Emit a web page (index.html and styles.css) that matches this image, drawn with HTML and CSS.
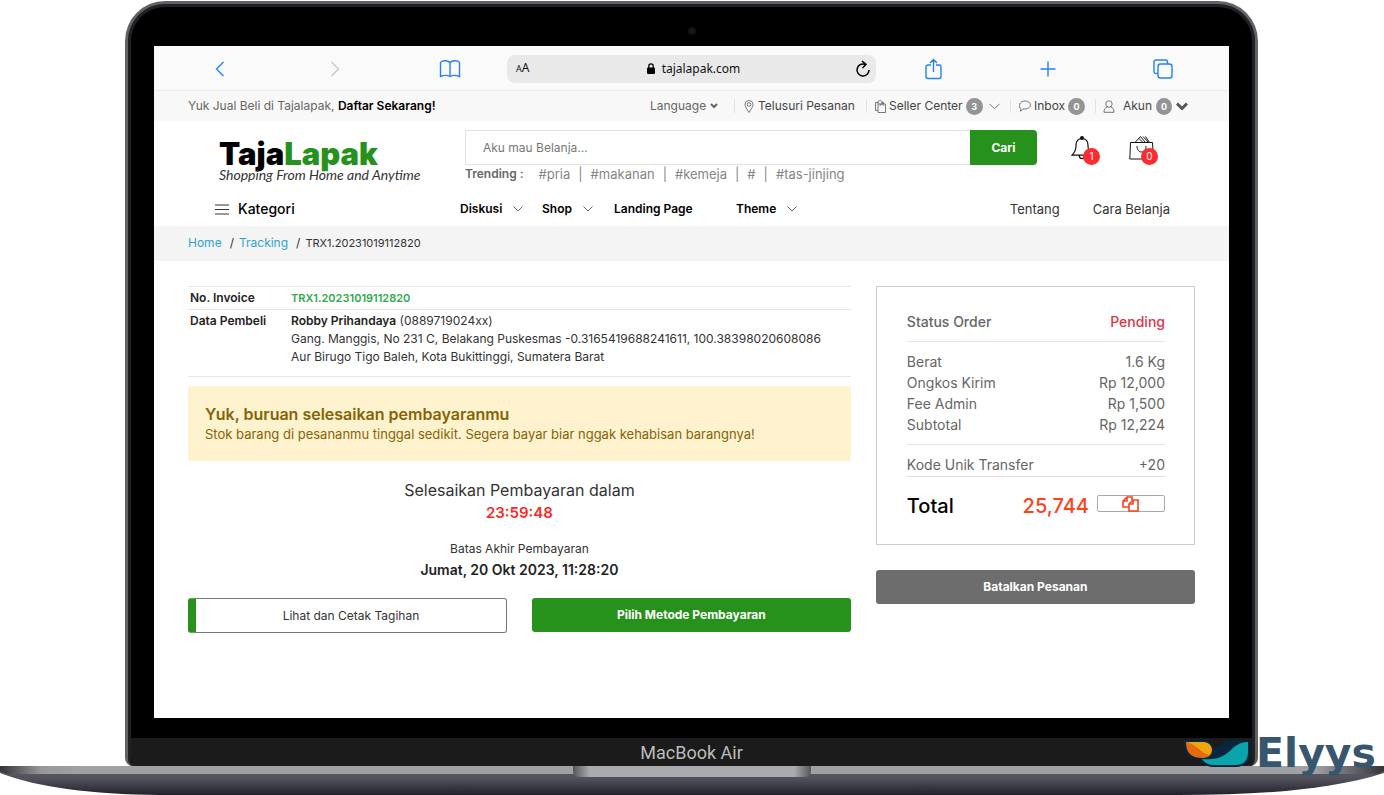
FILE: index.html
```html
<!DOCTYPE html>
<html lang="id">
<head>
<meta charset="utf-8">
<meta name="viewport" content="width=device-width, initial-scale=1">
<title>TajaLapak - Tracking</title>
<link rel="stylesheet" href="styles.css">
</head>
<body>
<div class="laptop">
  <div class="lid">
    <div class="bezel"><span class="camera"></span></div>
    <div class="screen">
      <div class="browser">
        <button class="tool" aria-label="Kembali"><svg width="12" height="18" viewBox="0 0 12 18"><path d="M9.500 2 2.500 9l7 7"/></svg></button>
        <button class="tool tool-off" aria-label="Maju"><svg width="12" height="18" viewBox="0 0 12 18"><path d="M2.500 2l7 7-7 7"/></svg></button>
        <button class="tool" aria-label="Bookmark"><svg width="22" height="20" viewBox="0 0 22 20"><path d="M11 4C9.500 1 3 1 1.500 3.500V17.500c3-1.300 7-1.300 9.500 0 2.500-1.300 6.500-1.300 9.500 0V3.500C19 1 12.500 1 11 4zM11 4v13.500"/></svg></button>
        <div class="address">
          <span class="font-size"><small>A</small>A</span>
          <span class="url"><svg width="8" height="11" viewBox="0 0 8 11"><rect y="4.500" width="8" height="6.500" rx="1"/><path d="M1.800 5V3a2.200 2.200 0 0 1 4.400 0v2" fill="none" stroke="#000" stroke-width="1.300"/></svg>tajalapak.com</span>
          <button class="reload" aria-label="Muat ulang"><svg width="16" height="18" viewBox="0 0 16 18"><path d="M10 4.300A6 6 0 1 0 14 10"/><path d="M7 1l4 3.300L7.500 8"/></svg></button>
        </div>
        <button class="tool" aria-label="Bagikan"><svg width="17" height="22" viewBox="0 0 17 22"><path d="M6 7H3a2 2 0 0 0-2 2v9.500a2 2 0 0 0 2 2h11a2 2 0 0 0 2-2V9a2 2 0 0 0-2-2h-3M8.500 14V2M5 5l3.500-3.500L12 5"/></svg></button>
        <button class="tool" aria-label="Tab baru"><svg width="16" height="16" viewBox="0 0 16 16"><path d="M8 .5v15M.5 8h15"/></svg></button>
        <button class="tool" aria-label="Semua tab"><svg width="20" height="20" viewBox="0 0 20 20"><rect x="5" y="5" width="14" height="14" rx="2.500"/><path d="M5 14.500H3a2 2 0 0 1-2-2V3a2 2 0 0 1 2-2h9.500a2 2 0 0 1 2 2v2"/></svg></button>
      </div>

      <div class="topbar">
        <p>Yuk Jual Beli di Tajalapak, <a href="#"><b>Daftar Sekarang!</b></a></p>
        <div class="links">
          <button class="link soft">Language <svg class="caret" width="8" height="6" viewBox="0 0 8 6"><path d="M1 1l3 3 3-3"/></svg></button>
          <a class="link" href="#"><svg width="10" height="13" viewBox="0 0 10 13"><path d="M5 12.500C3 9 1 7 1 4.500a4 4 0 0 1 8 0C9 7 7 9 5 12.500z"/><circle cx="5" cy="4.500" r="1.800"/></svg>Telusuri Pesanan</a>
          <a class="link seller" href="#"><svg width="11" height="13" viewBox="0 0 11 13"><path d="M3 10.500H.5v-8H3M7 2.500h1.500V4M3 4h7.500v8.500H3zM3 4V2c0-2 4-2 4 0v2M5 6c0-2.500 3.500-2.500 3.500 0"/></svg>Seller Center<span class="count">3</span><svg class="thin" width="11" height="7" viewBox="0 0 11 7"><path d="M.5.800 5.500 5.800l5-5"/></svg></a>
          <a class="link seller" href="#"><svg width="12" height="12" viewBox="0 0 12 12"><path d="M2 9.300C-1 6.500.5 1 6 1c7 0 7.500 7.500 0 8-1 0-1.500 0-2-.3C3.500 10 2.500 11 1 11c.8-.5 1-1 1-1.700z"/></svg>Inbox<span class="count">0</span></a>
          <button class="link account"><svg width="12" height="13" viewBox="0 0 12 13"><circle cx="6" cy="4" r="3.200"/><path d="M4.500 7C2 7.500 1 9 1 12.300h10C11 9 10 7.500 7.500 7"/></svg><span class="name">Akun</span><span class="count">0</span><svg class="bold" width="12" height="8" viewBox="0 0 12 8"><path d="M1 1.500l5 5 5-5"/></svg></button>
        </div>
      </div>

      <header class="header">
        <div class="masthead">
          <a class="logo" href="#"><span class="logo-name">Taja<em>Lapak</em></span><span class="logo-tag">Shopping From Home and Anytime</span></a>
          <div class="finder">
            <form class="search">
              <input type="text" aria-label="Cari produk" placeholder="Aku mau Belanja...">
              <button type="button">Cari</button>
            </form>
            <div class="trending"><b>Trending :</b><a href="#">#pria</a><i>|</i><a href="#">#makanan</a><i>|</i><a href="#">#kemeja</a><i>|</i><a href="#">#</a><i>|</i><a href="#">#tas-jinjing</a></div>
          </div>
          <div class="shortcuts">
            <a class="shortcut" href="#" aria-label="Notifikasi"><svg width="22" height="26" viewBox="0 0 24 26"><circle cx="12" cy="2" r="1.500" fill="#000"/><path d="M12 2.800c-4.500 0-6.500 3-6.500 7 0 6-1.500 8.500-4.500 11h22c-3-2.500-4.500-5-4.500-11 0-4-2-7-6.500-7zM9 21.500c0 4 6 4 6 0"/></svg><span class="alert-count">1</span></a>
            <a class="shortcut bag" href="#" aria-label="Keranjang"><svg width="25" height="26" viewBox="0 0 25 26"><path d="M1.500 7.500h22l1 16.500H.800zM6 7.500l5.500-6 5 6M10 3.500l4 4M14 1.500l5.500 6M16.500 1.500l4 6M8 11c0 8 9 8 9 0"/></svg><span class="alert-count">0</span></a>
          </div>
        </div>
        <nav class="nav">
          <button class="category"><svg width="14" height="11" viewBox="0 0 14 11"><path d="M0 1h14M0 5.500h14M0 10h14"/></svg>Kategori</button>
          <div class="menu">
            <a href="#">Diskusi<svg width="10" height="6" viewBox="0 0 10 6"><path d="M.5.500 5 5 9.500.500"/></svg></a>
            <a href="#">Shop<svg width="10" height="6" viewBox="0 0 10 6"><path d="M.5.500 5 5 9.500.500"/></svg></a>
            <a href="#">Landing Page</a>
            <a href="#">Theme<svg width="10" height="6" viewBox="0 0 10 6"><path d="M.5.500 5 5 9.500.500"/></svg></a>
          </div>
          <div class="pages"><a href="#">Tentang</a><a href="#">Cara Belanja</a></div>
        </nav>
      </header>

      <div class="crumbs"><a href="#">Home</a><span>/</span><a href="#">Tracking</a><span>/</span><small>TRX1.20231019112820</small></div>

      <main class="content">
        <section>
          <table class="invoice">
            <tr><th scope="row">No. Invoice</th><td><b class="number">TRX1.20231019112820</b></td></tr>
            <tr><th scope="row">Data Pembeli</th><td><b>Robby Prihandaya</b> (0889719024xx)<br>Gang. Manggis, No 231 C, Belakang Puskesmas -0.3165419688241611, 100.38398020608086<br>Aur Birugo Tigo Baleh, Kota Bukittinggi, Sumatera Barat</td></tr>
          </table>
          <div class="notice">
            <h2>Yuk, buruan selesaikan pembayaranmu</h2>
            <p>Stok barang di pesananmu tinggal sedikit. Segera bayar biar nggak kehabisan barangnya!</p>
          </div>
          <div class="deadline">
            <p class="lead">Selesaikan Pembayaran dalam</p>
            <p class="timer">23:59:48</p>
            <p class="until">Batas Akhir Pembayaran</p>
            <p class="date">Jumat, 20 Okt 2023, 11:28:20</p>
          </div>
          <div class="actions">
            <button class="btn outline">Lihat dan Cetak Tagihan</button>
            <button class="btn green">Pilih Metode Pembayaran</button>
          </div>
        </section>
        <aside>
          <div class="summary">
            <div class="row status"><span>Status Order</span><span class="pending">Pending</span></div>
            <div class="costs">
              <div class="row"><span>Berat</span><span>1.6 Kg</span></div>
              <div class="row"><span>Ongkos Kirim</span><span>Rp 12,000</span></div>
              <div class="row"><span>Fee Admin</span><span>Rp 1,500</span></div>
              <div class="row"><span>Subtotal</span><span>Rp 12,224</span></div>
            </div>
            <div class="row code"><span>Kode Unik Transfer</span><span>+20</span></div>
            <div class="total"><span>Total</span><span class="amount">25,744</span>
              <button class="copy" aria-label="Salin total"><svg width="17" height="16" viewBox="0 0 17 16"><path d="M6.500 11H1V5l4-4h5v3M5 1v4H1M7 8l4-4h5v11H7zM11 4v4H7"/></svg></button>
            </div>
          </div>
          <button class="btn grey">Batalkan Pesanan</button>
        </aside>
      </main>
    </div>
    <div class="chin">MacBook Air</div>
  </div>
  <svg class="base" viewBox="0 0 1384 29" preserveAspectRatio="none">
    <defs>
      <linearGradient id="body" x2="0" y2="1"><stop offset="0" stop-color="#5d5e67"/><stop offset=".45" stop-color="#50515a"/><stop offset="1" stop-color="#20212b"/></linearGradient>
      <linearGradient id="edge"><stop offset="0" stop-color="#33343a"/><stop offset=".03" stop-color="#98989c"/><stop offset=".06" stop-color="#a1a1a5"/><stop offset=".95" stop-color="#a1a1a5"/><stop offset="1" stop-color="#33343a"/></linearGradient>
      <linearGradient id="notch"><stop offset="0" stop-color="#55565e"/><stop offset=".07" stop-color="#a9aaaf"/><stop offset=".93" stop-color="#a9aaaf"/><stop offset="1" stop-color="#55565e"/></linearGradient>
    </defs>
    <path fill="url(#body)" d="M0 0H1384V7C1330 24 1260 29 1180 29H160C90 28 40 22 0 7z"/>
    <path fill="url(#edge)" d="M0 0H1384V5L1378 8H6L0 5z"/>
    <path fill="url(#notch)" d="M573 0H811V5q0 6-7 6H580q-7 0-7-6z"/>
    <path stroke="#34353e" stroke-dasharray="4 2" d="M450 20.500h16M918 20.500h16"/>
  </svg>
  <div class="maker">
    <svg width="66" height="28" viewBox="0 0 66 28"><path fill="#08273f" d="M0 1h20c5 0 8 3 9 8 8-1 10-8 20-8h17v12c0 10-6 15-14 15H30c-7 0-12-3-14-8C5 20 0 15 0 1z"/><path fill="#e56910" d="M2 3h17c12 1 12 16 0 16C6 19 2 13 2 3z"/><path fill="#efa510" d="M2 3h17c9 0 11 9 6 13C17 14 12 5 2 3z"/><path fill="#0aa5ab" d="M18 20c30 3 27-17 46-17v10c0 9-5 13-12 13H30c-6 0-9-2-12-6z"/></svg>
    <span>Elyys</span>
  </div>
</div>
</body>
</html>
```
FILE: styles.css
```css
* { box-sizing: border-box; }
body { margin: 0; background: #fff; color: #333; font: 12px/18px Inter, "Open Sans", sans-serif; }
p, h2 { margin: 0; }
a { color: inherit; text-decoration: none; }
button { padding: 0; border: 0; background: none; color: inherit; font: inherit; }
b { font-weight: 600; }
svg { fill: none; stroke: currentColor; flex: none; }

.laptop { position: relative; padding-top: 1px; overflow: hidden; }
.lid { margin: 0 126px 0 125px; padding: 0 23px; border: 3px solid #606266; border-bottom: 0; border-radius: 40px 40px 8px 8px; background: #000; box-shadow: inset 0 0 0 3px #202124; }
.bezel { height: 42px; display: flex; justify-content: center; align-items: center; padding-top: 12px; }
.camera { width: 8px; height: 8px; border-radius: 50%; background: #1a1b20; border: 2px solid #101114; }
.screen { margin: 0 3px; background: #fff; }
.chin { margin: 20px -20px 0; height: 28px; border-radius: 0 0 8px 8px; background: #1b1b1b; color: #bcbcbc; text-align: center; font: 18px/29px Roboto, sans-serif; }
.base { display: block; width: 100%; height: 29px; stroke: none; }

.browser { display: grid; grid-template-columns: 1fr 1fr 1fr 369px 1fr 1fr 1fr; align-items: center; height: 45px; padding: 1px 9px 0; background: #fafafa; border-bottom: 1px solid #ececec; }
.tool { display: grid; place-items: center; color: #2880f5; }
.tool svg { stroke-width: 1.4; }
.tool-off { color: #c8c8c8; }
.address { display: grid; grid-template-columns: 1fr auto 1fr; align-items: center; height: 28px; padding: 0 5px 0 9px; border-radius: 8px; background: #e9e9e9; color: #111; font-family: "Noto Sans", sans-serif; }
.font-size small { font-size: 9px; }
.url { display: flex; align-items: center; gap: 7px; }
.url svg { fill: #000; stroke: none; }
.reload { justify-self: end; display: flex; color: #000; }
.reload svg { stroke-width: 1.5; }

.topbar { display: flex; justify-content: space-between; align-items: center; height: 30px; padding: 0 41px 0 34px; background: #f8f8f8; color: #666; }
.topbar b { color: #000; }
.links { display: grid; grid-template-columns: 94px 132px 144px 85px 93px; }
.link { display: flex; align-items: center; gap: 4px; height: 14px; padding-left: 9px; border-left: 1px solid #e3e3e3; color: #444; white-space: nowrap; }
.link.soft { border-left-color: transparent; color: #666; }
.link.seller { gap: 3px; padding-left: 8px; }
.link svg { stroke-width: .7; }
.link .caret { stroke-width: 2; }
.link .bold { stroke-width: 3; color: #555; }
.link .thin { margin-left: 3px; }
.link.account { padding-left: 7px; }
.name { margin-left: 4px; }
.count { width: 17px; height: 17px; border-radius: 50%; background: #949494; color: #fff; font-size: 9px; font-weight: 700; line-height: 17px; text-align: center; }

.header { height: 105px; padding-top: 9px; }
.masthead { display: flex; align-items: flex-start; padding: 0 71px 0 65px; }
.logo { width: 246px; padding-top: 9px; display: flex; flex-direction: column; color: #000; }
.logo-name { font: 900 31px/29px Inter, sans-serif; }
.logo-name em { color: #27921b; font-style: normal; }
.logo-tag { color: #333; font: italic 14px/14px Lato, sans-serif; }
.finder { flex: 1; }
.search { display: flex; height: 35px; }
.search input { flex: 1; min-width: 0; padding: 0 17px; border: 1px solid #e2e2e2; border-right: 0; background: #fff; font: inherit; }
.search input::placeholder { color: #777; opacity: 1; }
.search button { width: 67px; border-radius: 0 4px 4px 0; background: #27921b; color: #fff; font-weight: 700; }
.trending { display: flex; gap: 8px; color: #858585; font-size: 13px; }
.trending b { margin-right: 7px; color: #666; font-size: 12px; }
.trending i { font-style: normal; }
.shortcuts { display: flex; gap: 29px; padding: 5px 0 0 34px; color: #111; }
.shortcut { position: relative; width: 29px; height: 32px; }
.shortcut svg { stroke-width: 1.3; }
.bag svg { stroke-width: 1; }
.alert-count { position: absolute; right: 0; bottom: 2px; width: 17px; height: 17px; border-radius: 50%; background: #fd2c2f; color: #fff; font-size: 10px; line-height: 17px; text-align: center; }
.nav { display: flex; align-items: center; margin-top: 17px; padding: 0 59px 0 61px; color: #000; }
.category { display: flex; align-items: center; gap: 9px; width: 245px; font-size: 14px; font-weight: 500; }
.category svg { stroke-width: .8; }
.menu { display: grid; grid-template-columns: 82px 72px 122px auto; justify-content: start; flex: 1; font-weight: 600; }
.menu a { display: flex; align-items: center; gap: 11px; }
.menu svg { stroke-width: .6; }
.pages { display: flex; gap: 33px; color: #333; font-size: 13px; }

.crumbs { height: 35px; padding: 0 34px; background: #f4f4f4; line-height: 34px; }
.crumbs a { color: #2fa3d4; }
.crumbs span { margin: 0 5px 0 8px; }
.crumbs small { font-size: 11px; }

.content { display: grid; grid-template-columns: 27fr 13fr; gap: 25px; padding: 25px 34px 85px; }
.invoice { width: 100%; border-collapse: collapse; }
.invoice tr { border-top: 1px solid #e6e6e6; }
.invoice tr:last-child { border-bottom: 1px solid #e6e6e6; }
.invoice th, .invoice td { padding: 2px; text-align: left; vertical-align: top; }
.invoice th { width: 101px; font-weight: 600; color: #222; }
.invoice b { color: #222; }
.invoice .number { color: #31a94c; font-size: 11px; }
.invoice tr:last-child td { padding-bottom: 10px; }
.notice { margin-top: 9px; padding: 18px 17px; border-radius: 2px; background: #fff2cf; color: #866405; font-size: 13px; }
.notice h2 { font-size: 16px; line-height: 21px; font-weight: 600; }
.deadline { padding-top: 18px; text-align: center; }
.lead { font-size: 16px; line-height: 22px; }
.timer { color: #fb2a2a; font-size: 15px; line-height: 24px; font-weight: 600; }
.until { margin-top: 15px; line-height: 18px; }
.date { color: #222; font-size: 14px; line-height: 23px; font-weight: 600; }
.actions { display: grid; grid-template-columns: 1fr 1fr; gap: 25px; align-items: start; margin-top: 17px; }
.btn { width: 100%; height: 34px; border-radius: 3px; color: #fff; font-weight: 700; }
.outline { height: 35px; border: 1px solid #777; border-left: 8px solid #27921b; color: #333; font-weight: 400; }
.green { background: #27921b; }
.grey { margin-top: 25px; background: #6d6d6d; }

.summary { padding: 24px 29px 23px 30px; border: 1px solid #ccc; color: #666; font-size: 14px; line-height: 21px; }
.row { display: flex; justify-content: space-between; }
.status { padding-bottom: 9px; border-bottom: 1px solid #e6e6e6; font-weight: 500; }
.pending { color: #dc3545; }
.costs { padding: 9px 0; border-bottom: 1px solid #e6e6e6; }
.code { padding: 9px 0 1px; border-bottom: 1px solid #ddd; }
.total { display: flex; align-items: center; padding-top: 14px; color: #000; font-size: 20px; line-height: 30px; font-weight: 500; }
.amount { margin-left: auto; color: #fc421f; }
.copy { display: grid; place-items: center; width: 68px; height: 17px; margin: 0 0 6px 8px; border: 1px solid #aaa; border-radius: 2px; color: #fc421f; }
.copy svg { stroke-width: 1.6; }

.maker { position: absolute; right: 8px; bottom: 22px; display: flex; align-items: center; gap: 6px; color: #39566f; font: 700 41px/40px "DejaVu Sans", sans-serif; }
.maker svg { stroke: none; }
```
